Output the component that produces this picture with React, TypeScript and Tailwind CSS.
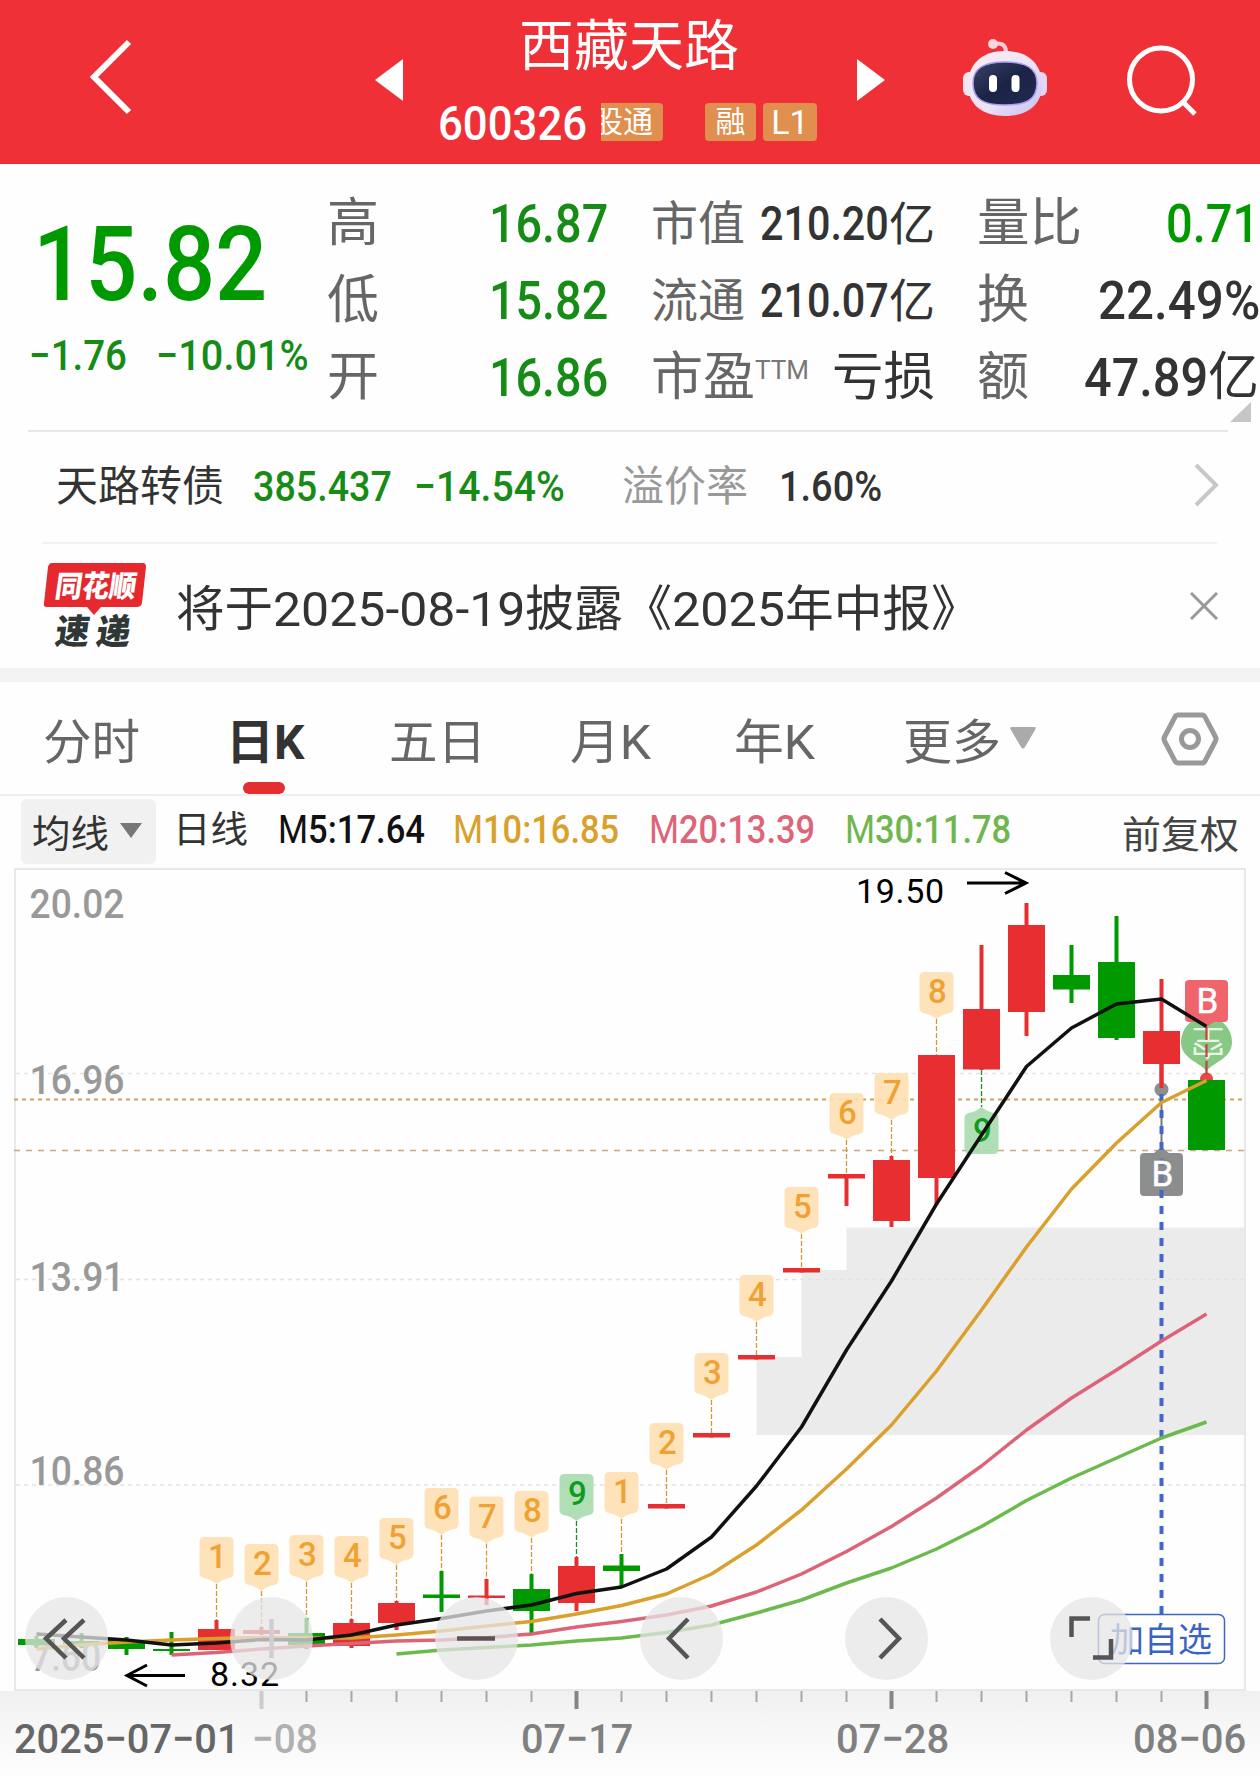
import React, { useLayoutEffect, useRef, useState } from 'react';
import { clsx } from 'clsx';

const FONT = 'Roboto, "Noto Sans CJK SC", sans-serif';

// Squeezes or stretches its text so it fills the width given in className
const Fit: React.FC<{ className: string; children: React.ReactNode }> = ({ className, children }) => {
  const outer = useRef<HTMLSpanElement>(null);
  const inner = useRef<HTMLSpanElement>(null);
  const [scale, setScale] = useState(1);

  useLayoutEffect(() => {
    if (outer.current && inner.current && inner.current.offsetWidth) {
      setScale(outer.current.offsetWidth / inner.current.offsetWidth);
    }
  }, [children]);

  return (
    <span ref={outer} className={clsx('block shrink-0 leading-none whitespace-nowrap', className)}>
      <span ref={inner} className="inline-block origin-left" style={{ transform: `scaleX(${scale})` }}>
        {children}
      </span>
    </span>
  );
};

const RobotIcon = () => (
  <svg width="86" height="82" viewBox="0 0 86 82" fill="none">
    <defs>
      <linearGradient id="shell" x1="0" y1="0" x2="1" y2="1">
        <stop offset="0" stopColor="#fbeef2" />
        <stop offset="0.55" stopColor="#ece4f4" />
        <stop offset="1" stopColor="#c5bdf2" />
      </linearGradient>
      <linearGradient id="visor" x1="0" y1="0" x2="1" y2="1">
        <stop offset="0" stopColor="#3a4266" />
        <stop offset="0.5" stopColor="#1b2346" />
        <stop offset="1" stopColor="#222a50" />
      </linearGradient>
    </defs>
    <path d="M31 8C40 6 44 9 44 17" stroke="#f6cdd9" strokeWidth="4" />
    <circle cx="31" cy="8" r="5" fill="#f8d5df" />
    <rect x="1" y="36" width="14" height="24" rx="6" fill="#f1e6f2" />
    <rect x="71" y="36" width="14" height="24" rx="6" fill="#e6d6f4" />
    <path d="M43 15C66 15 80 28 80 49C80 69 65 80 43 80C21 80 6 69 6 49C6 28 20 15 43 15Z" fill="url(#shell)" />
    <path
      d="M43 26C64 26 75 32 75 47C75 64 64 69 43 69C22 69 11 64 11 47C11 32 22 26 43 26Z"
      fill="url(#visor)"
      stroke="#a99cf0"
      strokeWidth="1.5"
    />
    <rect x="27" y="39" width="8" height="17" rx="4" fill="#fff" />
    <rect x="49.500" y="39" width="8" height="17" rx="4" fill="#fff" />
  </svg>
);

const Header = () => (
  <header className="flex h-[164px] items-start bg-[#f03037] text-white">
    <svg className="mt-[36px] ml-[88px] shrink-0" width="46" height="82" fill="none">
      <path d="M41 6L6 41L41 76" stroke="#fff" strokeWidth="6" />
    </svg>
    <svg className="mt-[59px] ml-[241px] shrink-0" width="28" height="42">
      <path d="M28 0V42L0 21Z" fill="#fff" />
    </svg>

    <div className="ml-[33px] flex w-[384px] shrink-0 flex-col pt-[19px]">
      <Fit className="ml-[83px] w-[220px] text-[55px]">西藏天路</Fit>
      <div className="mt-[28px] flex h-[40px] items-center">
        <Fit className="mt-[2px] ml-[2px] w-[149px] text-[49px] font-medium">600326</Fit>
        <span className="ml-[14px] flex h-[38px] w-[62px] items-center justify-end overflow-hidden rounded-r-[4px] bg-[#e08f4e] pr-[10px]">
          <Fit className="w-[60px] text-[30px]">股通</Fit>
        </span>
        <span className="ml-[42px] flex h-[38px] w-[51px] items-center justify-center rounded-[4px] bg-[#e08f4e] text-[30px] leading-none">
          融
        </span>
        <span className="ml-[7px] flex h-[38px] w-[54px] items-center justify-center rounded-[4px] bg-[#e08f4e] text-[34px] leading-none">
          L1
        </span>
      </div>
    </div>

    <svg className="mt-[59px] ml-[37px] shrink-0" width="28" height="42">
      <path d="M0 0L28 21L0 42Z" fill="#fff" />
    </svg>
    <div className="mt-[36px] ml-[77px] shrink-0">
      <RobotIcon />
    </div>
    <svg className="mt-[43px] ml-[78px] shrink-0" width="74" height="76" fill="none" stroke="#fff" strokeWidth="5">
      <circle cx="35" cy="36.500" r="31.500" />
      <path d="M57 59L69 71" />
    </svg>
  </header>
);

const Quote = () => (
  <section className="relative flex h-[266px] pt-[21px] text-[#333]">
    <div className="w-[327px] shrink-0 text-[#009900]">
      <Fit className="mt-[28px] ml-[33px] w-[234px] text-[104px] font-medium">15.82</Fit>
      <div className="mt-[18px] flex text-[42px] text-[#168c16]">
        <Fit className="ml-[29px] w-[98px] font-medium">−1.76</Fit>
        <Fit className="ml-[29px] w-[153px] font-medium">−10.01%</Fit>
      </div>
    </div>

    <div className="w-[281px] shrink-0">
      {[['高', '16.87'], ['低', '15.82'], ['开', '16.86']].map(([label, value]) => (
        <div key={label} className="flex h-[77px] items-center justify-between">
          <Fit className="w-[52px] text-[52px] text-[#666]">{label}</Fit>
          <Fit className="mt-[1px] w-[119px] text-[53px] font-medium text-[#168c16]">{value}</Fit>
        </div>
      ))}
    </div>

    <div className="ml-[43px] w-[284px] shrink-0">
      {[['市值', '210.20'], ['流通', '210.07']].map(([label, value]) => (
        <div key={label} className="flex h-[77px] items-center">
          <Fit className="w-[94px] text-[47px] text-[#666]">{label}</Fit>
          <Fit className="ml-[15px] w-[129px] text-[48px] font-medium">{value}</Fit>
          <Fit className="w-[46px] text-[46px]">亿</Fit>
        </div>
      ))}
      <div className="flex h-[77px] items-center">
        <Fit className="w-[104px] text-[52px] text-[#666]">市盈</Fit>
        <Fit className="mb-[16px] w-[54px] text-[26px] text-[#777]">TTM</Fit>
        <Fit className="ml-[23px] w-[103px] text-[52px]">亏损</Fit>
      </div>
    </div>

    <div className="ml-[42px] w-[283px] shrink-0">
      <div className="flex h-[77px] items-center justify-between">
        <Fit className="w-[105px] text-[52px] text-[#666]">量比</Fit>
        <Fit className="mt-[1px] mr-[1px] w-[93px] text-[53px] font-medium text-[#009900]">0.71</Fit>
      </div>
      <div className="flex h-[77px] items-center justify-between">
        <Fit className="w-[52px] text-[52px] text-[#666]">换</Fit>
        <Fit className="mt-[1px] w-[162px] text-[53px] font-medium">22.49%</Fit>
      </div>
      <div className="flex h-[77px] items-center">
        <Fit className="w-[52px] text-[52px] text-[#666]">额</Fit>
        <Fit className="mt-[1px] ml-[55px] w-[124px] text-[53px] font-medium">47.89</Fit>
        <Fit className="w-[51px] text-[52px]">亿</Fit>
      </div>
    </div>

    <svg className="absolute top-[238px] left-[1230px]" width="21" height="20">
      <path d="M21 0V20H0Z" fill="#c6c6c6" />
    </svg>
  </section>
);

const BondRow = () => (
  <div className="mx-[28px] flex h-[112px] w-[1200px] items-center border-t-2 border-[#e8e8e8] text-[42px] text-[#333]">
    <Fit className="ml-[28px] w-[168px]">天路转债</Fit>
    <Fit className="ml-[29px] w-[139px] font-medium text-[#168c16]">385.437</Fit>
    <Fit className="ml-[22px] w-[151px] font-medium text-[#168c16]">−14.54%</Fit>
    <Fit className="ml-[57px] w-[126px] text-[#999]">溢价率</Fit>
    <Fit className="ml-[31px] w-[103px] font-medium">1.60%</Fit>
    <svg className="mb-[5px] ml-[311px] shrink-0" width="28" height="44" fill="none">
      <path d="M3 2L23 22L3 42" stroke="#c8c8c8" strokeWidth="4" />
    </svg>
  </div>
);

const NewsRow = () => (
  <div className="mx-[43px] flex h-[126px] w-[1174px] items-center border-t-2 border-[#f2f2f2] text-[49px] text-[#333]">
    <svg className="mt-[2px] shrink-0" width="106" height="90" fontFamily={FONT} fontWeight="900">
      <path d="M9 1H100Q103 1 103 5L99 41Q98 45 94 45H58L51 53L44 45H4Q0 45 1 41L5 5Q6 1 9 1Z" fill="#e5292e" />
      <text transform="translate(11 35) skewX(-8)" fontSize="30" fill="#fff" textLength="81" lengthAdjust="spacingAndGlyphs">
        同花顺
      </text>
      <g transform="translate(11 82) skewX(-8)" fontSize="35" fill="#2f3836">
        <text textLength="34" lengthAdjust="spacingAndGlyphs">速</text>
        <text x="41" textLength="34" lengthAdjust="spacingAndGlyphs">递</text>
      </g>
    </svg>
    <div className="mt-[6px] ml-[27px] flex">
      <Fit className="w-[97px]">将于</Fit>
      <Fit className="w-[252px]">2025-08-19</Fit>
      <Fit className="w-[98px]">披露</Fit>
      <Fit className="w-[49px]">《</Fit>
      <Fit className="w-[113px]">2025</Fit>
      <Fit className="w-[146px]">年中报</Fit>
      <Fit className="w-[49px]">》</Fit>
    </div>
    <svg className="-mr-[1px] mb-[1px] ml-auto shrink-0" width="28" height="28" fill="none">
      <path d="M1 1L27 27M27 1L1 27" stroke="#999" strokeWidth="3" />
    </svg>
  </div>
);

const Tabs = () => (
  <nav className="flex h-[114px] items-center border-b-2 border-[#eee] text-[48px] text-[#666]">
    <Fit className="mt-[9px] ml-[43px] w-[97px]">分时</Fit>
    <div className="relative mt-[9px] ml-[86px] font-bold text-[#333]">
      <Fit className="w-[79px]">日K</Fit>
      <span className="absolute top-[63px] left-[17px] h-[12px] w-[42px] rounded-full bg-[#e22f30]" />
    </div>
    <Fit className="mt-[9px] ml-[84px] w-[97px]">五日</Fit>
    <Fit className="mt-[9px] ml-[84px] w-[81px]">月K</Fit>
    <Fit className="mt-[9px] ml-[83px] w-[81px]">年K</Fit>
    <Fit className="mt-[9px] ml-[88px] w-[98px]">更多</Fit>
    <svg className="mb-[1px] ml-[9px] shrink-0" width="26" height="22">
      <path d="M2 0H24Q27 0 25 3L15 20Q13 23 11 20L1 3Q-1 0 2 0Z" fill="#aaa" />
    </svg>
    <svg className="mt-[1px] ml-[125px] shrink-0" width="58" height="56" fill="none" stroke="#999" strokeWidth="5" strokeLinejoin="round">
      <path d="M17 4H41Q43 4 44 6L54 25Q56 28 54 31L44 50Q43 52 41 52H17Q15 52 14 50L4 31Q2 28 4 25L14 6Q15 4 17 4Z" />
      <circle cx="29" cy="28" r="8.500" />
    </svg>
  </nav>
);

const averages = [
  { label: '5:17.64', className: 'ml-[30px] text-[#111]', width: 'w-[117px]' },
  { label: '10:16.85', className: 'ml-[28px] text-[#d9a02c]', width: 'w-[136px]' },
  { label: '20:13.39', className: 'ml-[30px] text-[#dd6579]', width: 'w-[136px]' },
  { label: '30:11.78', className: 'ml-[30px] text-[#6fb650]', width: 'w-[136px]' },
];

const AverageBar = () => (
  <div className="flex h-[70px] items-center text-[#333]">
    <button className="ml-[21px] flex h-[65px] w-[135px] shrink-0 items-center rounded-[6px] bg-[#f1f1f1] pt-[5px] pl-[11px]">
      <Fit className="w-[77px] text-[38px]">均线</Fit>
      <svg className="mb-[6px] ml-[11px]" width="22" height="15">
        <path d="M0 0H22L11 15Z" fill="#777" />
      </svg>
    </button>
    <Fit className="mb-[1px] ml-[17px] w-[75px] text-[37px]">日线</Fit>
    {averages.map((avg) => (
      <div key={avg.label} className={clsx('mb-[1px] flex text-[39px]', avg.className)}>
        <Fit className="w-[30px]">M</Fit>
        <Fit className={clsx('font-medium', avg.width)}>{avg.label}</Fit>
      </div>
    ))}
    <Fit className="mt-[8px] mr-[21px] ml-auto w-[117px] text-[38px] text-[#444]">前复权</Fit>
  </div>
);

const RED = '#e72f32';
const GREEN = '#009900';

const px = (i: number) => 36.5 + 45 * i;

// [color, high, body top, body bottom, low]
const candles: [string, number, number, number, number][] = [
  [GREEN, 1636, 1639, 1645, 1648],
  [GREEN, 1633, 1641, 1644, 1648],
  [GREEN, 1637, 1640, 1649, 1655],
  [GREEN, 1632, 1649, 1651, 1655],
  [RED, 1620, 1629, 1650, 1650],
  [RED, 1627, 1630, 1634, 1635],
  [GREEN, 1618, 1633, 1645, 1649],
  [RED, 1619, 1623, 1646, 1648],
  [RED, 1601, 1603, 1623, 1630],
  [GREEN, 1571, 1594.5, 1598, 1612],
  [RED, 1579, 1595.5, 1598, 1605],
  [GREEN, 1574, 1589, 1611, 1633],
  [RED, 1557, 1566, 1603, 1611],
  [GREEN, 1554, 1565.5, 1571, 1586],
  [RED, 1504, 1504, 1508.5, 1508.5],
  [RED, 1433, 1433, 1437.5, 1437.5],
  [RED, 1355, 1355, 1359.5, 1359.5],
  [RED, 1268, 1268, 1272.5, 1272.5],
  [RED, 1174, 1174, 1178.5, 1206],
  [RED, 1156, 1160, 1221, 1227],
  [RED, 1055, 1055, 1178, 1205],
  [RED, 945, 1009, 1069.5, 1070],
  [RED, 903, 925, 1012, 1036],
  [GREEN, 945, 975, 989.5, 1003],
  [GREEN, 916, 962, 1038, 1040],
  [RED, 979, 1031, 1064, 1088],
  [GREEN, 1080, 1080, 1150, 1150],
];

const lines = [
  { color: '#6cb94e', start: 8, ys: [1654, 1650, 1647.5, 1645, 1641, 1638, 1632.5, 1625, 1613, 1600, 1583, 1568, 1549, 1526.5, 1500.5, 1478, 1458, 1438, 1422] },
  { color: '#dd6478', start: 3, ys: [1655, 1652.5, 1649, 1646, 1643.5, 1641, 1640, 1637.5, 1634, 1627, 1621.5, 1615, 1606, 1592, 1574, 1551.5, 1526.5, 1498, 1466, 1430, 1398, 1370, 1341, 1314] },
  { color: '#d9a02c', start: 0, ys: [1649, 1645, 1642, 1640, 1638.5, 1637.5, 1638, 1638, 1635, 1631, 1626, 1621.5, 1614, 1605.5, 1594, 1574, 1545, 1510, 1469, 1425, 1371, 1310, 1247, 1189, 1143, 1102.5, 1080.5] },
  { color: '#111111', start: 0, ys: [1634, 1637, 1640, 1645, 1643, 1639.5, 1640, 1635, 1625, 1618.5, 1611, 1605, 1593.5, 1587, 1569, 1537, 1486, 1427, 1350, 1281, 1204, 1135, 1066.5, 1028, 1004, 999, 1026.5] },
];

// Sequence markers above the candles: [candle index, digit, y of the tip]
const markers: [number, string, number][] = [
  [4, '1', 1584],
  [5, '2', 1591],
  [6, '3', 1582],
  [7, '4', 1583],
  [8, '5', 1565],
  [9, '6', 1535],
  [10, '7', 1543.5],
  [11, '8', 1538],
  [12, '9', 1521],
  [13, '1', 1519],
  [14, '2', 1470],
  [15, '3', 1400],
  [16, '4', 1322],
  [17, '5', 1234],
  [18, '6', 1140],
  [19, '7', 1120],
  [20, '8', 1019],
];

const Marker: React.FC<{ index: number; digit: string; tip: number }> = ({ index, digit, tip }) => {
  const x = px(index);
  const green = digit === '9';
  return (
    <g>
      <path d={`M${x} ${tip}V${candles[index][1]}`} stroke={green ? '#1f8a2c' : '#cf9a3c'} strokeWidth="1.3" strokeDasharray="5 2" />
      <path
        d={`M${x - 17} ${tip - 42}q0 -5 5 -5h24q5 0 5 5v31q0 4 -4 5q-7 1 -13 6q-6 -5 -13 -6q-4 -1 -4 -5z`}
        fill={green ? '#a9dbad' : '#fedfb3'}
        fillOpacity="0.9"
      />
      <text x={x + 1} y={tip - 16} fontSize="33" fontWeight="500" textAnchor="middle" fill={green ? '#109a20' : '#efa233'}>
        {digit}
      </text>
    </g>
  );
};

const prices: [string, number][] = [
  ['20.02', 918],
  ['16.96', 1094],
  ['13.91', 1290.5],
  ['10.86', 1485],
  ['7.60', 1671],
];

const CandleChart = () => (
  <svg className="block" width="1260" height="825" viewBox="0 866 1260 825" fontFamily={FONT} fill="none">
    <path d="M756.500 1435V1357H801.500V1270H846.500V1227.500H1245V1435Z" fill="#ebebeb" />
    <path d="M16 1073.500H1245M16 1279.500H1245M16 1485H1245" stroke="#e2e2e2" strokeWidth="1.500" strokeDasharray="4 4" />
    <rect x="15" y="869" width="1230" height="821" stroke="#e8e8ea" strokeWidth="2" />

    {prices.map(([label, y]) => (
      <text
        key={label}
        x={label === '7.60' ? 31 : 29.5}
        y={y}
        fontSize="41"
        fontWeight="500"
        fill="#999"
        textLength={label === '7.60' ? 70 : 95}
        lengthAdjust="spacingAndGlyphs"
      >
        {label}
      </text>
    ))}

    <path d="M14 1099.500H1243" stroke="#d3a25a" strokeWidth="2" strokeDasharray="4 4" />
    <path d="M14 1150.500H1245" stroke="#c9a87c" strokeWidth="1.600" strokeDasharray="6 6" />

    {candles.map(([color, high, top, bottom, low], i) => (
      <g key={i} fill={color}>
        <rect x={px(i) - 2} y={high} width="4" height={low - high} />
        <rect x={px(i) - 18.5} y={top} width="37" height={bottom - top} />
      </g>
    ))}

    {markers.map(([index, digit, tip]) => (
      <Marker key={index} index={index} digit={digit} tip={tip} />
    ))}

    {/* Marker hanging below its candle */}
    <path d="M981.500 1070V1107" stroke="#1f8a2c" strokeWidth="1.300" strokeDasharray="5 2" />
    <path d="M964.500 1149q0 5 5 5h24q5 0 5 -5v-31q0 -4 -4 -5q-7 -1 -13 -6q-6 5 -13 6q-4 1 -4 5z" fill="#a9dbad" fillOpacity="0.9" />
    <text x="982.500" y="1142" fontSize="33" fontWeight="500" textAnchor="middle" fill="#109a20">9</text>

    {/* Trade signals */}
    <path d="M1206.500 1072C1203 1063 1181 1060 1181 1042A25.500 25.500 0 0 1 1232 1042C1232 1060 1210 1063 1206.500 1072Z" fill="#86c884" />
    <text transform="translate(1208 1030) scale(1 -1)" fontSize="34" textAnchor="middle" fill="#e9f6e6">空</text>
    <path d="M1189 980H1224Q1228 980 1228 984V1018Q1228 1022 1224 1022H1214L1206.500 1027L1199 1022H1189Q1185 1022 1185 1018V984Q1185 980 1189 980Z" fill="#f0656b" />
    <circle cx="1206.500" cy="1079" r="6.500" fill="#e8474c" />
    <rect x="1188" y="1080" width="37" height="10" fill={GREEN} />
    <path d="M1206.500 1027V1076" stroke="#c8413c" strokeWidth="2.200" strokeDasharray="13 4" />
    <text x="1207.500" y="1013" fontSize="35" textAnchor="middle" fill="#fff" stroke="#fff" strokeWidth="0.500">B</text>

    <circle cx="1161.500" cy="1089.500" r="7" fill="#8e8e8e" />
    <path d="M1161.500 1096V1150" stroke="#777" strokeWidth="2" />
    <path d="M1161.500 1064V1088" stroke={RED} strokeWidth="4" />
    <path d="M1144 1153H1154L1161.500 1147L1169 1153H1179Q1183 1153 1183 1157V1192Q1183 1196 1179 1196H1144Q1140 1196 1140 1192V1157Q1140 1153 1144 1153Z" fill="#8c8e8d" />
    <path d="M1161.500 1094V1614" stroke="#4168c8" strokeWidth="4" strokeDasharray="8 8" />
    <path d="M1161.500 1156V1190" stroke="#8c8e8d" strokeOpacity="0.600" strokeWidth="4" />
    <text x="1162.500" y="1186" fontSize="35" textAnchor="middle" fill="#fff" stroke="#fff" strokeWidth="0.500">B</text>

    {lines.map((line) => (
      <polyline
        key={line.color}
        points={line.ys.map((y, i) => `${px(line.start + i)},${y}`).join(' ')}
        stroke={line.color}
        strokeWidth="3.500"
        strokeLinejoin="round"
      />
    ))}

    {/* Highest and lowest price */}
    <g stroke="#000" strokeWidth="3">
      <path d="M967 883H1026M1005 872.500L1026 883L1005 893.500" />
      <path d="M185 1675.500H127M147 1665L127 1675.500L147 1686" />
    </g>
    <text x="856" y="902.500" fontSize="34" fill="#000" textLength="88">19.50</text>
    <text x="210" y="1686" fontSize="34" fill="#000" textLength="69">8.32</text>

    <rect x="1098.500" y="1614.500" width="126" height="49" rx="6" fill="#fff" stroke="#3f66c4" strokeWidth="1.500" />
    <text x="1110" y="1652" fontSize="34" fill="#3b63c4">加自选</text>
  </svg>
);

const controls = [
  { name: 'first', d: 'M41 23L21 41.500L41 61M59 23L39 41.500L59 61', color: '#555' },
  { name: 'zoom-in', d: 'M41.500 22V61', color: '#cfcfd2' },
  { name: 'zoom-out', d: 'M22 41.500H60', color: '#5f5252' },
  { name: 'previous', d: 'M48 22L29 41.500L48 61', color: '#555' },
  { name: 'next', d: 'M35 22L54 41.500L35 61', color: '#555' },
  { name: 'expand', d: 'M21.500 40V21.500H40M43 60.500H61V42', color: '#555' },
];

const Chart = () => (
  <div className="relative">
    <CandleChart />
    <div className="absolute top-[731px] left-[24.5px] flex gap-[122px]">
      {controls.map((control) => (
        <button key={control.name} aria-label={control.name} className="h-[83px] w-[83px] rounded-full bg-[rgba(230,230,230,0.75)]">
          <svg width="83" height="83" fill="none">
            <path d={control.d} stroke={control.color} strokeWidth="4.500" />
          </svg>
        </button>
      ))}
    </div>
  </div>
);

const DateAxis = () => (
  <footer className="h-[85px] bg-linear-to-b from-[#f0f0f0] via-[#f8f8f8] to-[#fdfdfd] font-medium text-[#808080]">
    <svg className="block" width="1260" height="18">
      {Array.from({ length: 22 }, (_, n) => n + 5).map((i) => {
        const major = i % 7 === 5;
        return (
          <rect
            key={i}
            x={px(i) - (major ? 2 : 1)}
            y="0"
            width={major ? 4 : 2}
            height={major ? 18 : 11}
            fill={i === 5 ? '#cccccc' : major ? '#858585' : '#a8a8a8'}
          />
        );
      })}
    </svg>
    <div className="mt-[10px] flex text-[41px]">
      <Fit className="ml-[14px] w-[226px] text-[#666]">2025−07−01</Fit>
      <Fit className="ml-[12px] w-[66px] text-[#b0b0b0]">−08</Fit>
      <Fit className="ml-[203px] w-[112px]">07−17</Fit>
      <Fit className="ml-[203px] w-[113px]">07−28</Fit>
      <Fit className="ml-[184px] w-[113px]">08−06</Fit>
    </div>
  </footer>
);

export default function App() {
  return (
    <div className="h-[1776px] w-[1260px] overflow-hidden bg-[#fefefe] font-[Roboto,'Noto_Sans_CJK_SC',sans-serif]">
      <Header />
      <Quote />
      <BondRow />
      <NewsRow />
      <div className="h-[14px] bg-[#f3f3f3]" />
      <Tabs />
      <AverageBar />
      <Chart />
      <DateAxis />
    </div>
  );
}
